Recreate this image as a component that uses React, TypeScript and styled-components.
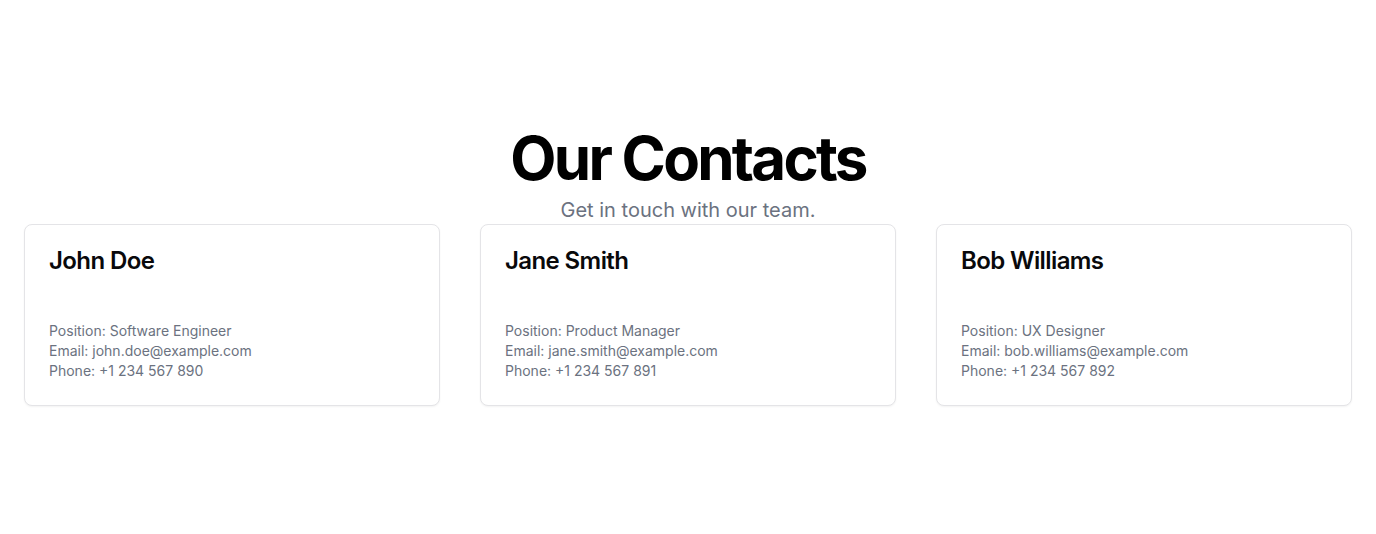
import React from "react";
import styled, { createGlobalStyle } from "styled-components";

const GlobalStyle = createGlobalStyle`
  * { box-sizing: border-box; }
  html, body { margin: 0; padding: 0; background: #ffffff; }
  body { font-family: Inter, "Noto Sans", sans-serif; color: #09090b; }
`;

const Page = styled.main`
  min-height: 100vh;
  display: flex;
  flex-direction: column;
  justify-content: center;
  padding: 0 24px;
`;

const Header = styled.header`
  display: flex;
  flex-direction: column;
  align-items: center;
  gap: 8px;
`;

const Title = styled.h1`
  margin: 0;
  font-size: 60px;
  line-height: 60px;
  font-weight: 700;
  letter-spacing: -2.75px;
  color: #000;
`;

const Subtitle = styled.p`
  margin: 0;
  font-size: 20px;
  line-height: 28px;
  color: #6b7280;
`;

const Grid = styled.section`
  display: grid;
  grid-template-columns: repeat(3, 1fr);
  gap: 40px;
`;

const Card = styled.article`
  border: 1px solid #e4e4e7;
  border-radius: 8px;
  background: #fff;
  box-shadow: 0 1px 2px rgba(0, 0, 0, 0.05);
  padding: 24px;
`;

const Name = styled.h3`
  margin: 0 0 48px;
  font-size: 24px;
  line-height: 24px;
  font-weight: 600;
  letter-spacing: -0.6px;
  color: #09090b;
`;

const Detail = styled.p`
  margin: 0;
  font-size: 14px;
  line-height: 20px;
  color: #6b7280;
`;

const contacts = [
  { name: "John Doe", position: "Software Engineer", email: "john.doe@example.com", phone: "+1 234 567 890" },
  { name: "Jane Smith", position: "Product Manager", email: "jane.smith@example.com", phone: "+1 234 567 891" },
  { name: "Bob Williams", position: "UX Designer", email: "bob.williams@example.com", phone: "+1 234 567 892" },
];

export default function App() {
  return (
    <>
      <GlobalStyle />
      <Page>
        <Header>
          <Title>Our Contacts</Title>
          <Subtitle>Get in touch with our team.</Subtitle>
        </Header>
        <Grid>
          {contacts.map((c) => (
            <Card key={c.name}>
              <Name>{c.name}</Name>
              <Detail>Position: {c.position}</Detail>
              <Detail>Email: {c.email}</Detail>
              <Detail>Phone: {c.phone}</Detail>
            </Card>
          ))}
        </Grid>
      </Page>
    </>
  );
}
